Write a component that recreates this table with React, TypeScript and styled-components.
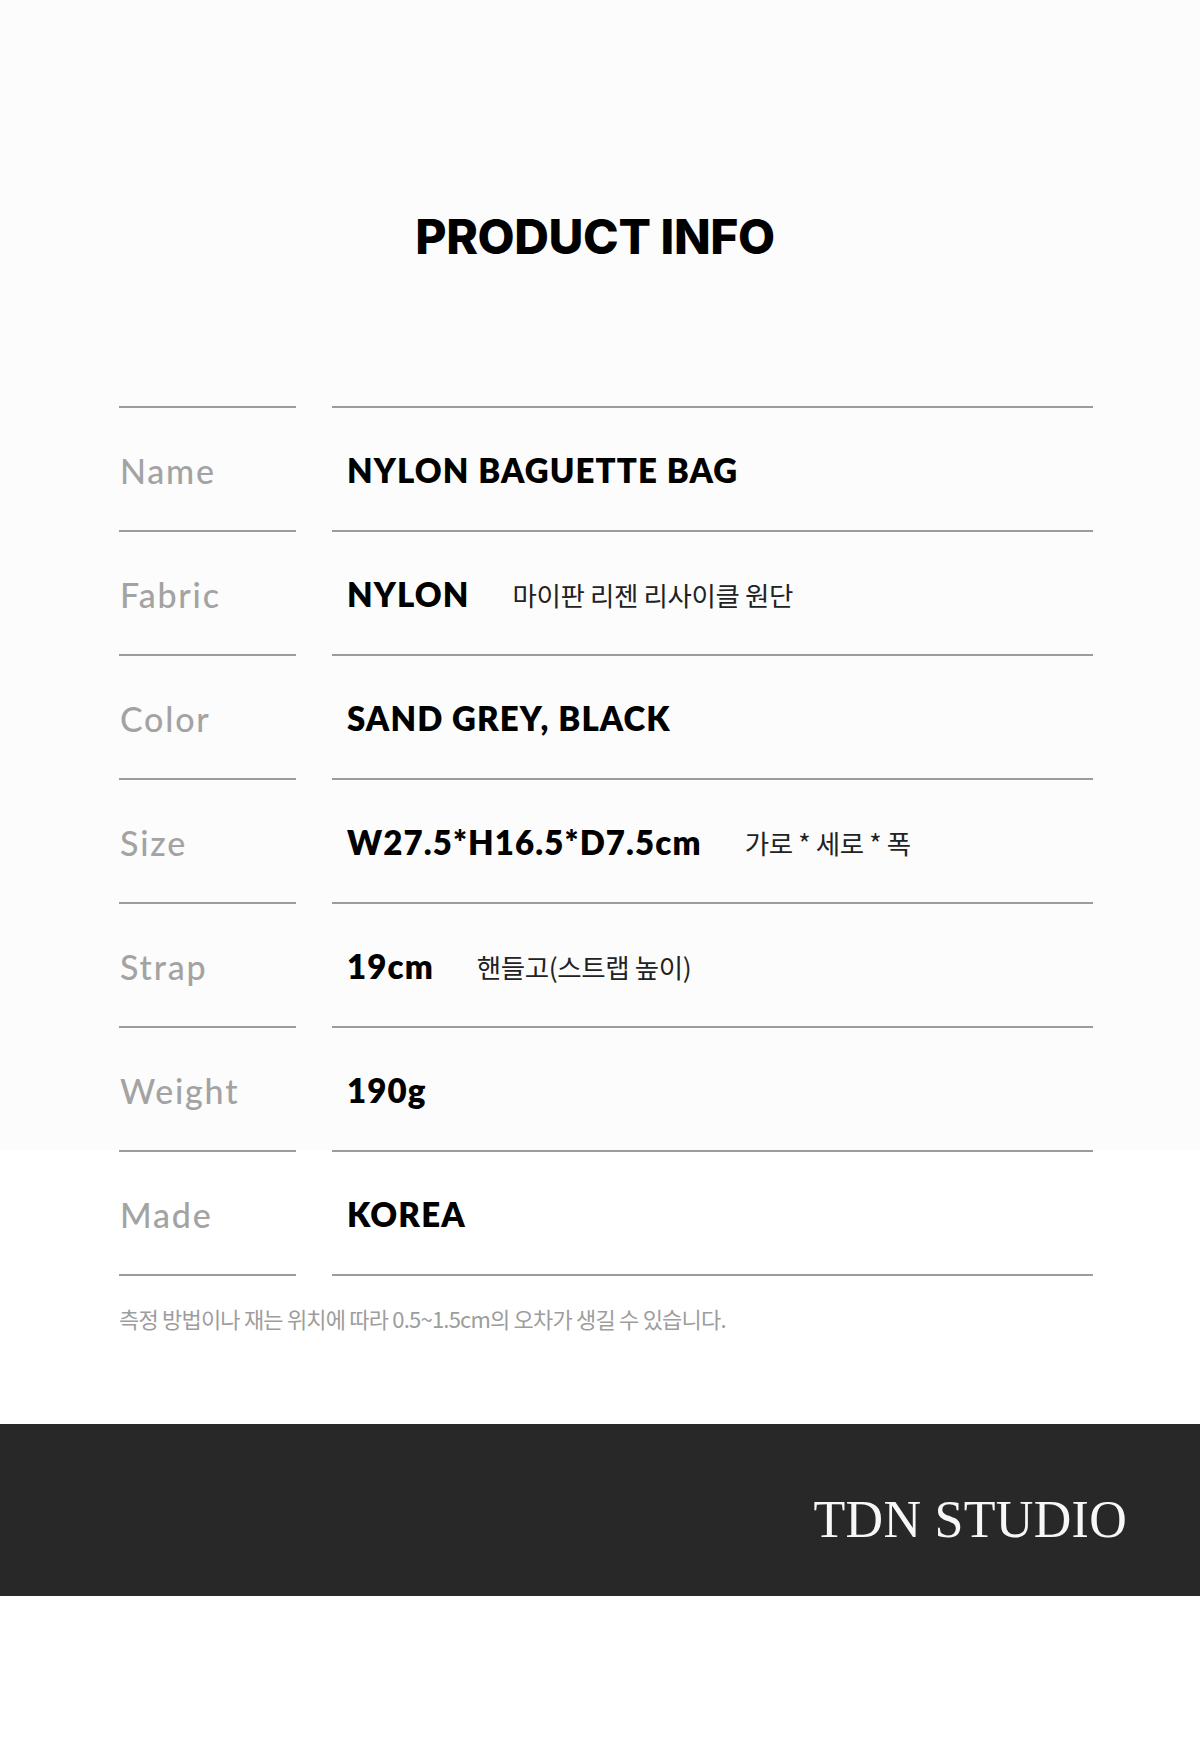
import * as React from "react";
import styled, { createGlobalStyle } from "styled-components";

const GlobalStyle = createGlobalStyle`
  html, body {
    margin: 0;
    padding: 0;
    background: #ffffff;
  }
  * {
    box-sizing: border-box;
  }
`;

const Page = styled.div`
  width: 1200px;
  min-height: 1737px;
  background: linear-gradient(to bottom, #fcfcfc 0, #fcfcfc 1150px, #ffffff 1150px);
  display: flex;
  flex-direction: column;
`;

const Header = styled.header`
  padding: 208px 0 140px;
  display: flex;
  justify-content: center;
`;

const Title = styled.h1`
  margin: 0 0 0 -10px;
  font-family: "Inter", "Noto Sans", sans-serif;
  font-weight: 800;
  font-size: 48px;
  line-height: 58px;
  letter-spacing: -0.4px;
  color: #000;
`;

const Table = styled.div`
  margin: 0 107px 0 119px;
  display: grid;
  grid-template-columns: 177px 1fr;
  column-gap: 36px;
`;

const Cell = styled.div<{ $first?: boolean }>`
  height: ${({ $first }) => ($first ? 126 : 124)}px;
  border-top: ${({ $first }) => ($first ? "2px solid #9c9c9c" : "none")};
  border-bottom: 2px solid #9c9c9c;
  display: flex;
  align-items: center;
`;

const Label = styled(Cell)`
  padding: 2px 0 0 1px;
  font-family: "Lato", "Open Sans", sans-serif;
  font-weight: 500;
  font-size: 34px;
  letter-spacing: 1.8px;
  color: #a3a3a3;
`;

const Value = styled(Cell)`
  padding: 2px 0 0 15px;
`;

const Main = styled.span`
  font-family: "Lato", "Liberation Sans", sans-serif;
  font-weight: 800;
  font-size: 33px;
  letter-spacing: 1.1px;
  color: #000;
`;

const Sub = styled.span`
  margin-left: 43px;
  font-family: "Noto Sans CJK KR", "Noto Sans", sans-serif;
  font-weight: 400;
  font-size: 26.5px;
  letter-spacing: -0.4px;
  color: #222;
`;

const Note = styled.p`
  margin: 27px 0 0 119px;
  font-family: "Noto Sans CJK KR", "Noto Sans", sans-serif;
  font-weight: 400;
  font-size: 22px;
  line-height: 30px;
  letter-spacing: -0.8px;
  color: #9d9d9d;
`;

const Footer = styled.footer`
  margin-top: 91px;
  height: 172px;
  background: #282828;
  display: flex;
  align-items: center;
  justify-content: flex-end;
  padding: 19px 73px 0 0;
`;

const Brand = styled.span`
  font-family: "Liberation Serif", "DejaVu Serif", serif;
  font-weight: 400;
  font-size: 52px;
  letter-spacing: 0.3px;
  color: #f7f7f7;
`;

type Row = { label: string; value: string; sub?: string };

const rows: Row[] = [
  { label: "Name", value: "NYLON BAGUETTE BAG" },
  { label: "Fabric", value: "NYLON", sub: "마이판 리젠 리사이클 원단" },
  { label: "Color", value: "SAND GREY, BLACK" },
  { label: "Size", value: "W27.5*H16.5*D7.5cm", sub: "가로 * 세로 * 폭" },
  { label: "Strap", value: "19cm", sub: "핸들고(스트랩 높이)" },
  { label: "Weight", value: "190g" },
  { label: "Made", value: "KOREA" },
];

export default function App() {
  return (
    <>
      <GlobalStyle />
      <Page>
        <Header>
          <Title>PRODUCT INFO</Title>
        </Header>
        <Table>
          {rows.map((r, i) => (
            <React.Fragment key={r.label}>
              <Label $first={i === 0}>{r.label}</Label>
              <Value $first={i === 0}>
                <Main>{r.value}</Main>
                {r.sub && <Sub>{r.sub}</Sub>}
              </Value>
            </React.Fragment>
          ))}
        </Table>
        <Note>측정 방법이나 재는 위치에 따라 0.5~1.5cm의 오차가 생길 수 있습니다.</Note>
        <Footer>
          <Brand>TDN STUDIO</Brand>
        </Footer>
      </Page>
    </>
  );
}
